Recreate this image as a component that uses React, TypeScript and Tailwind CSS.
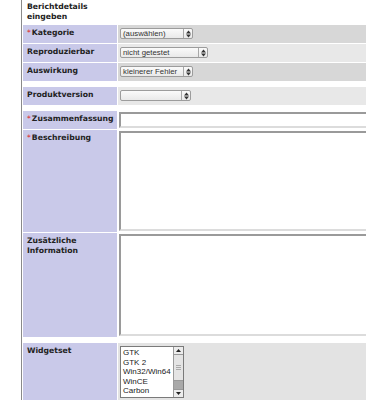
import React from "react";

const labelCls =
  "bg-[#c9c9e9] pl-[4px] pt-[3px] font-bold text-[7.7px] leading-[10px] text-[#222]";

function Req() {
  return <span className="text-[#e02020] font-normal mr-[1px]">*</span>;
}

function Arrows() {
  return (
    <svg width="5" height="8" viewBox="0 0 5 8" className="block">
      <polygon points="0,3.4 2.5,0.6 5,3.4" fill="#333" />
      <polygon points="0,4.6 2.5,7.4 5,4.6" fill="#333" />
    </svg>
  );
}

function Select({ text, w }: { text: string; w: string }) {
  return (
    <div
      className={`${w} mt-[3px] ml-[2px] h-[11px] flex items-stretch border border-[#9c9c9c] rounded-[2px] bg-gradient-to-b from-[#fafafa] to-[#e9e9e9] font-['Liberation_Sans',Arial,sans-serif] text-[7.8px] leading-[9px] text-[#333]`}
    >
      <span className="flex-1 pl-[2px] whitespace-nowrap overflow-hidden">{text}</span>
      <span className="w-[9px] border-l border-[#a8a8a8] flex items-center justify-center">
        <Arrows />
      </span>
    </div>
  );
}

function Spacer() {
  return <div className="col-span-2 h-[4px] bg-white" />;
}

export default function App() {
  const widgets = ["GTK", "GTK 2", "Win32/Win64", "WinCE", "Carbon"];
  return (
    <div className="w-[366px] h-[400px] overflow-hidden bg-white pl-[21px] font-['DejaVu_Sans',Verdana,sans-serif]">
      <div className="w-[420px] h-[400px] border-l border-[#8a8a8a] pl-px">
        <div className="grid grid-cols-[94px_1fr] gap-px bg-white">
          {/* header */}
          <div className="h-[24px] bg-white pl-[4px] pt-[2px] font-bold text-[7.7px] leading-[10px] text-[#222]">
            Berichtdetails eingeben
          </div>
          <div className="h-[24px] bg-white" />

          <div className={`${labelCls} h-[18px]`}>
            <Req />Kategorie
          </div>
          <div className="bg-[#d7d7d7] h-[18px]">
            <Select text="(auswählen)" w="w-[73px]" />
          </div>

          <div className={`${labelCls} h-[18px]`}>Reproduzierbar</div>
          <div className="bg-[#e8e8e8] h-[18px]">
            <Select text="nicht getestet" w="w-[88px]" />
          </div>

          <div className={`${labelCls} h-[18px]`}>Auswirkung</div>
          <div className="bg-[#d7d7d7] h-[18px]">
            <Select text="kleinerer Fehler" w="w-[73px]" />
          </div>

          <Spacer />

          <div className={`${labelCls} h-[18px]`}>Produktversion</div>
          <div className="bg-[#e8e8e8] h-[18px]">
            <Select text="" w="w-[71px]" />
          </div>

          <Spacer />

          <div className={`${labelCls} h-[18px]`}>
            <Req />Zusammenfassung
          </div>
          <div className="bg-white h-[18px] pl-px pt-px">
            <input
              readOnly
              className="block w-[310px] h-[16px] bg-white border-2 border-t-[#9a9a9a] border-l-[#9a9a9a] border-b-[#dcdcdc] border-r-[#dcdcdc] outline-none"
            />
          </div>

          <div className={`${labelCls} h-[102px]`}>
            <Req />Beschreibung
          </div>
          <div className="bg-white h-[102px] pl-px pt-px">
            <textarea
              readOnly
              className="block w-[310px] h-[100px] resize-none bg-white border-2 border-t-[#9a9a9a] border-l-[#9a9a9a] border-b-[#dcdcdc] border-r-[#dcdcdc] outline-none"
            />
          </div>

          <div className={`${labelCls} h-[104px]`}>
            Zusätzliche Information
          </div>
          <div className="bg-white h-[104px] pl-px pt-px">
            <textarea
              readOnly
              className="block w-[310px] h-[102px] resize-none bg-white border-2 border-t-[#9a9a9a] border-l-[#9a9a9a] border-b-[#dcdcdc] border-r-[#dcdcdc] outline-none"
            />
          </div>

          <Spacer />

          <div className={`${labelCls} h-[70px]`}>Widgetset</div>
          <div className="bg-[#e3e3e3] h-[70px] pl-[2px] pt-[3px]">
            <div className="w-[64px] h-[52px] flex border border-[#7a7a7a] bg-white font-['Liberation_Sans',Arial,sans-serif] text-[8px] leading-[9.5px] text-[#222]">
              <div className="flex-1 pl-[2px] pt-[1px] whitespace-nowrap overflow-hidden">
                {widgets.map((w) => (
                  <div key={w}>{w}</div>
                ))}
              </div>
              <div className="w-[10px] flex flex-col border-l border-[#9a9a9a] bg-[#c8c8c8]">
                <div className="h-[8px] flex items-center justify-center bg-[#ececec] border-b border-[#999]">
                  <svg width="5" height="3" viewBox="0 0 5 3">
                    <polygon points="0,3 2.5,0 5,3" fill="#222" />
                  </svg>
                </div>
                <div className="h-[26px] bg-[#e4e4e4] border-b border-[#999] flex flex-col items-center justify-center gap-px">
                  <div className="w-[5px] h-px bg-[#aaa]" />
                  <div className="w-[5px] h-px bg-[#aaa]" />
                  <div className="w-[5px] h-px bg-[#aaa]" />
                </div>
                <div className="flex-1 bg-[#a9a9a9]" />
                <div className="h-[8px] flex items-center justify-center bg-[#ececec] border-t border-[#999]">
                  <svg width="5" height="3" viewBox="0 0 5 3">
                    <polygon points="0,0 2.5,3 5,0" fill="#222" />
                  </svg>
                </div>
              </div>
            </div>
          </div>
        </div>
      </div>
    </div>
  );
}
